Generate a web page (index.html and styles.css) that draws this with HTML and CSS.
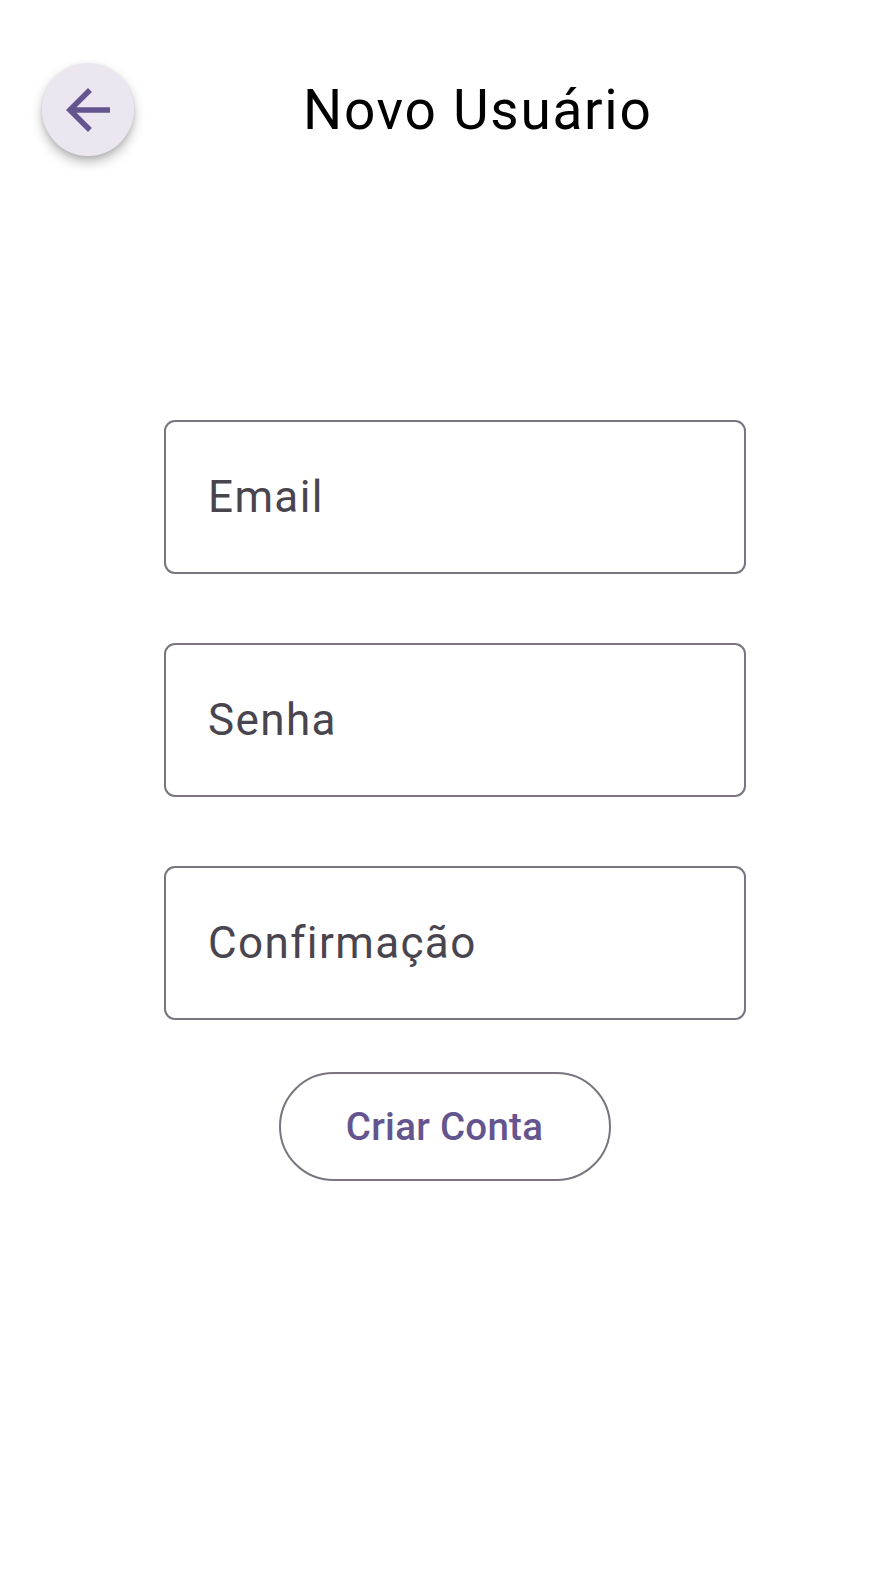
FILE: index.html
```html
<!DOCTYPE html>
<html lang="pt">
<head>
<meta charset="utf-8">
<title>Novo Usuário</title>
<link rel="stylesheet" href="styles.css">
</head>
<body>
<header class="appbar">
  <button class="back" aria-label="Voltar">
    <svg class="back-icon" viewBox="0 0 24 24" width="66" height="66"><path d="M20 11H7.83l5.59-5.59L12 4l-8 8 8 8 1.41-1.41L7.83 13H20v-2z"/></svg>
  </button>
  <h1 class="title">Novo Usuário</h1>
</header>
<main class="content">
  <div class="fields">
    <div class="field"><span class="label">Email</span></div>
    <div class="field"><span class="label">Senha</span></div>
    <div class="field"><span class="label">Confirmação</span></div>
  </div>
  <div class="actions">
    <button class="outlined">Criar Conta</button>
  </div>
</main>
</body>
</html>
```
FILE: styles.css
```css
html, body {
  margin: 0;
  padding: 0;
  background: #ffffff;
  font-family: Roboto, "Noto Sans", "DejaVu Sans", sans-serif;
}

.appbar {
  display: flex;
  align-items: center;
  padding: 63px 0 0 42px;
}

.back {
  width: 92px;
  height: 93px;
  flex: none;
  border: none;
  border-radius: 50%;
  background: #ebe6f0;
  box-shadow: 0 6px 12px rgba(0, 0, 0, 0.26), 0 2px 4px rgba(0, 0, 0, 0.10);
  display: flex;
  align-items: center;
  justify-content: center;
  padding: 0;
  margin: 0;
}

.back-icon {
  fill: #65558f;
  display: block;
}

.title {
  margin: 0 0 0 169px;
  font-size: 55px;
  font-weight: 400;
  color: #000000;
  letter-spacing: 1.7px;
  line-height: 1.2;
}

.content {
  margin-top: 264px;
}

.fields {
  margin-left: 164px;
  width: 582px;
  display: flex;
  flex-direction: column;
  gap: 69px;
}

.field {
  box-sizing: border-box;
  height: 154px;
  border: 2px solid #79747e;
  border-radius: 11px;
  padding-left: 42px;
  display: flex;
  align-items: center;
}

.label {
  font-size: 44px;
  color: #49454f;
  letter-spacing: 1.375px;
}

.actions {
  display: flex;
  justify-content: center;
  margin-top: 52px;
}

.outlined {
  box-sizing: border-box;
  width: 332px;
  height: 109px;
  border: 2px solid #79747e;
  border-radius: 55px;
  background: transparent;
  font-family: Roboto, "Noto Sans", sans-serif;
  font-size: 38.5px;
  font-weight: 500;
  letter-spacing: 0.275px;
  color: #65558f;
  padding: 0;
}
```
